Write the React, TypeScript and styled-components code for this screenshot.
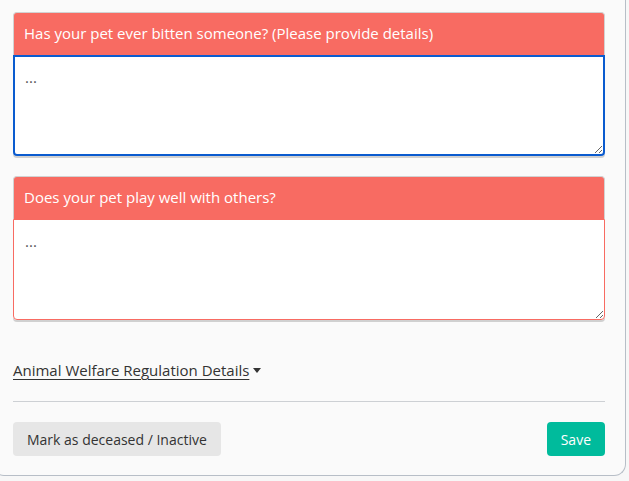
import React from "react";
import styled, { createGlobalStyle } from "styled-components";

const Global = createGlobalStyle`
  html, body { margin: 0; padding: 0; background: #f7f7f7; }
  body { font-family: "Open Sans", "Noto Sans", sans-serif; overflow: hidden; }
  * { box-sizing: border-box; }
`;

const Page = styled.div`
  width: 629px;
  height: 481px;
  overflow: hidden;
`;

const Panel = styled.div`
  margin-left: -8px;
  width: 634px;
  background: #fafafa;
  border: 1px solid #b7bec7;
  border-top: none;
  border-radius: 0 0 12px 12px;
  padding: 12px 20px 19px;
  display: flex;
  flex-direction: column;
`;

const Card = styled.div`
  display: flex;
  flex-direction: column;
  margin-bottom: 20px;
  border-radius: 4px;
  box-shadow: 0 2px 0 #d0d0d0;
`;

const CardHeader = styled.div`
  height: 43px;
  background: #f86b62;
  border: 1px solid #d2d2d2;
  border-bottom: none;
  border-radius: 4px 4px 0 0;
  color: #ffffff;
  font-size: 15px;
  padding: 0 10px 2px;
  display: flex;
  align-items: center;
`;

const Answer = styled.textarea<{ $focused?: boolean }>`
  display: block;
  width: 100%;
  height: 101px;
  margin: 0;
  resize: vertical;
  background: #ffffff;
  border: ${(p) => (p.$focused ? "2px solid #0a5bcf" : "1px solid #f86b62")};
  border-radius: 0 0 4px 4px;
  padding: ${(p) => (p.$focused ? "10px 10px" : "11px 11px")};
  font-family: "Open Sans", "Noto Sans", sans-serif;
  font-size: 15px;
  color: #555;
  outline: none;
  &::placeholder { color: #555; }
`;

const Disclosure = styled.a`
  margin-top: 20px;
  align-self: flex-start;
  color: #333;
  font-size: 15px;
  text-decoration: underline;
  text-underline-offset: 3px;
  display: flex;
  align-items: center;
  cursor: pointer;
  line-height: 20px;
`;

const Caret = styled.span`
  display: inline-block;
  width: 0;
  height: 0;
  margin-left: 4px;
  border-left: 4px solid transparent;
  border-right: 4px solid transparent;
  border-top: 5px solid #333;
`;

const Divider = styled.hr`
  margin: 21px 0 20px;
  border: none;
  border-top: 1px solid #cdd0d4;
  height: 0;
`;

const Actions = styled.div`
  display: flex;
  justify-content: space-between;
  align-items: center;
`;

const Button = styled.button<{ $primary?: boolean }>`
  height: 34px;
  padding: 0 14px;
  border: none;
  border-radius: 4px;
  font-family: "Open Sans", "Noto Sans", sans-serif;
  font-size: 14px;
  background: ${(p) => (p.$primary ? "#00bb9c" : "#e6e6e6")};
  color: ${(p) => (p.$primary ? "#ffffff" : "#333333")};
  cursor: pointer;
`;

export default function App() {
  return (
    <Page>
      <Global />
      <Panel>
        <Card>
          <CardHeader>Has your pet ever bitten someone? (Please provide details)</CardHeader>
          <Answer $focused placeholder="..." />
        </Card>
        <Card>
          <CardHeader>Does your pet play well with others?</CardHeader>
          <Answer placeholder="..." />
        </Card>
        <Disclosure>
          Animal Welfare Regulation Details
          <Caret />
        </Disclosure>
        <Divider />
        <Actions>
          <Button>Mark as deceased / Inactive</Button>
          <Button $primary>Save</Button>
        </Actions>
      </Panel>
    </Page>
  );
}
